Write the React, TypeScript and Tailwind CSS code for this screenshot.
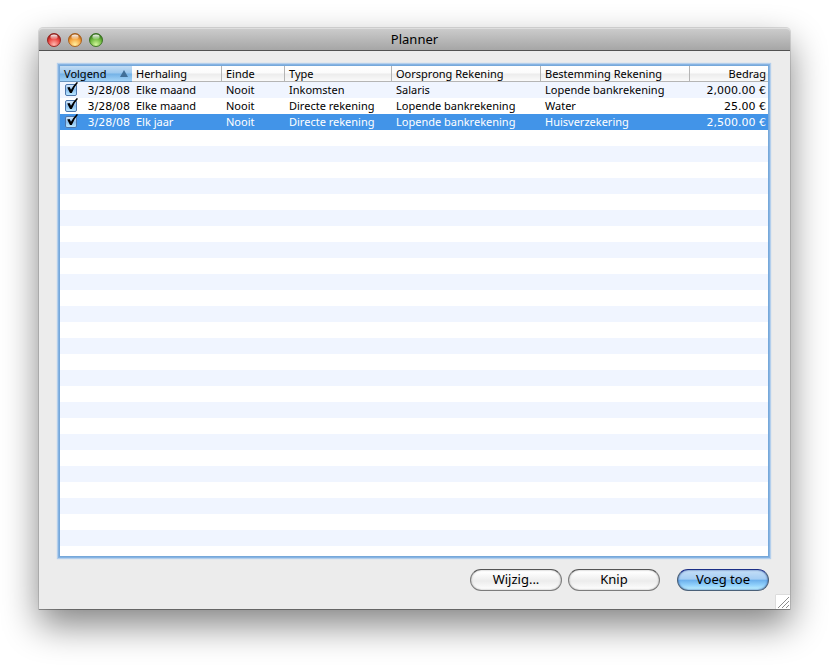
import React from "react";

type Transaction = {
  id: number;
  date: string;
  repeat: string;
  end: string;
  type: string;
  from: string;
  to: string;
  amount: string;
  selected?: boolean;
};

const transactions: Transaction[] = [
  {
    id: 1,
    date: "3/28/08",
    repeat: "Elke maand",
    end: "Nooit",
    type: "Inkomsten",
    from: "Salaris",
    to: "Lopende bankrekening",
    amount: "2,000.00 €",
  },
  {
    id: 2,
    date: "3/28/08",
    repeat: "Elke maand",
    end: "Nooit",
    type: "Directe rekening",
    from: "Lopende bankrekening",
    to: "Water",
    amount: "25.00 €",
  },
  {
    id: 3,
    date: "3/28/08",
    repeat: "Elk jaar",
    end: "Nooit",
    type: "Directe rekening",
    from: "Lopende bankrekening",
    to: "Huisverzekering",
    amount: "2,500.00 €",
    selected: true,
  },
];

const columns = [
  { title: "Herhaling", width: "w-[90px]" },
  { title: "Einde", width: "w-[63px]" },
  { title: "Type", width: "w-[107px]" },
  { title: "Oorsprong Rekening", width: "w-[149px]" },
  { title: "Bestemming Rekening", width: "w-[149px]" },
];

const lights = [
  { name: "Sluit", id: "red", dark: "#8e1713", mid: "#ea4540", light: "#ffb9b0" },
  { name: "Minimaliseer", id: "amber", dark: "#a3560f", mid: "#f5a23c", light: "#fff0a0" },
  { name: "Vergroot", id: "green", dark: "#2f6a17", mid: "#6db83e", light: "#d3f79c" },
];

const TitleBar = () => {
  return (
    <header className="relative flex h-[23px] items-center justify-center rounded-t border-t border-[#dedede] border-b border-b-[#515151] bg-linear-to-b from-[#cbcbcb] to-[#a6a6a6] pb-[2px]">
      <div className="absolute left-2 top-1 flex gap-[7px]">
        {lights.map((l) => (
          <button key={l.id} aria-label={l.name} className="size-[14px]">
            <svg viewBox="0 0 14 14" className="size-[14px]">
              <defs>
                <radialGradient id={l.id} cx="0.5" cy="0.85" r="0.8">
                  <stop offset="0" stopColor={l.light} />
                  <stop offset="0.6" stopColor={l.mid} />
                  <stop offset="1" stopColor={l.dark} />
                </radialGradient>
                <linearGradient id={l.id + "-gloss"} x1="0" y1="0" x2="0" y2="1">
                  <stop offset="0" stopColor="#fff" stopOpacity="0.95" />
                  <stop offset="1" stopColor="#fff" stopOpacity="0.15" />
                </linearGradient>
              </defs>
              <circle cx="7" cy="7" r="6.5" fill={`url(#${l.id})`} stroke={l.dark} strokeWidth="1" strokeOpacity="0.85" />
              <ellipse cx="7" cy="3.9" rx="3.6" ry="2.3" fill={`url(#${l.id}-gloss)`} />
            </svg>
          </button>
        ))}
      </div>
      <h1 className="text-[13px] leading-4">Planner</h1>
    </header>
  );
};

const CheckBox = ({ label }: { label: string }) => {
  return (
    <span className="relative block size-3">
      <input
        type="checkbox"
        defaultChecked
        aria-label={label}
        className="peer block size-3 appearance-none rounded-[2px] border border-[#4d76ab] bg-linear-to-b from-[#d3e6f9] via-[#8cc0f0] to-[#b9e6ff]"
      />
      {/* the tick sticks out of the box */}
      <svg
        viewBox="0 0 14 14"
        className="pointer-events-none invisible absolute -top-[2px] left-0 size-[14px] peer-checked:visible"
      >
        <path d="M2.2 5.6 L4.6 5 L6 7.8 Q8.6 3.2 11.8 0 L13 0.8 Q9.2 4.8 6.8 11 L5 11 Z" fill="#000" />
      </svg>
    </span>
  );
};

const PlanTable = () => {
  return (
    <div className="mr-px flex-1 bg-white bg-[repeating-linear-gradient(to_bottom,#f0f5ff_0px,#f0f5ff_16px,#fff_16px,#fff_32px)] bg-[position:0_16px] shadow-[0_0_0_1px_#76a8da,0_0_0_2px_#86b3e2,0_0_1px_3px_#b4cfec]">
      <table className="w-full table-fixed border-collapse whitespace-nowrap text-left text-[11px] leading-4">
        <thead>
          <tr className="h-4 bg-[linear-gradient(to_bottom,#fff_0px,#fbfbfb_7px,#ececec_8px,#fafafa_15px,#b5b5b5_15px,#b5b5b5_16px)]">
            <th
              aria-sort="ascending"
              className="w-[72px] bg-[linear-gradient(to_bottom,#c3dcf3_0px,#9cc8ee_7px,#74b2e6_8px,#a3d3f7_15px,#6a94bd_15px,#6a94bd_16px)] p-0 pl-1 font-normal"
            >
              <div className="flex items-center justify-between pr-1">
                Volgend
                <svg viewBox="0 0 8 7" className="mb-[2px] h-[7px] w-2">
                  <path d="M4 0 L8 7 H0 Z" fill="#416f98" />
                </svg>
              </div>
            </th>
            {columns.map((col) => (
              <th key={col.title} className={`${col.width} p-0 pl-1 font-normal shadow-[inset_-1px_0_0_#b5b5b5]`}>
                {col.title}
              </th>
            ))}
            <th className="p-0 pr-[2px] text-right font-normal">Bedrag</th>
          </tr>
        </thead>
        <tbody>
          {transactions.map((t) => (
            <tr key={t.id} className={t.selected ? "h-4 bg-[#4294e8] text-white" : "h-4"}>
              <td className="p-0">
                <div className="flex items-center justify-between pl-[5px] pr-[2px]">
                  <CheckBox label={`${t.repeat} ${t.type}`} />
                  <span className="pt-[2px] font-['DejaVu_Sans',sans-serif] leading-[14px]">{t.date}</span>
                </div>
              </td>
              <td className="p-0 pl-1">{t.repeat}</td>
              <td className="p-0 pl-1">{t.end}</td>
              <td className="p-0 pl-1">{t.type}</td>
              <td className="p-0 pl-1">{t.from}</td>
              <td className="p-0 pl-1">{t.to}</td>
              <td className="p-0 pt-[2px] pr-[2px] text-right font-['DejaVu_Sans',sans-serif] leading-[14px]">
                {t.amount}
              </td>
            </tr>
          ))}
        </tbody>
      </table>
    </div>
  );
};

const plain =
  "h-[22px] w-[92px] rounded-full border border-[#7c7c7c] border-t-[#555] bg-linear-to-b from-white from-10% via-[#ececec] via-55% to-white pb-[2px] text-[13px] leading-4 shadow-[inset_0_0_2px_#a0a0a0]";
const primary =
  "ml-[11px] h-[22px] w-[92px] rounded-full border border-[#4a6078] border-t-[#1c2f86] bg-[linear-gradient(to_bottom,#c5dff7_0%,#a5cdf3_45%,#6db1ec_52%,#90d0fb_75%,#c3f3ff_100%)] pb-[2px] text-[13px] leading-4 shadow-[inset_0_0_2px_#24489a]";

const App = () => {
  return (
    <div className="flex min-h-screen flex-col bg-white px-[39px] pt-7 pb-[61px] font-['Noto_Sans',sans-serif] text-black">
      <main className="relative flex flex-1 flex-col rounded-t bg-[#ececec] shadow-[0_0_0_1px_rgba(0,0,0,0.12),0_1px_0_0_rgba(0,0,0,0.25),0_16px_36px_rgba(0,0,0,0.49)]">
        <TitleBar />
        <div className="flex flex-1 flex-col px-[21px] pt-[15px] pb-[18px]">
          <PlanTable />
          <footer className="mt-[13px] flex justify-end gap-[6px]">
            <button className={plain}>Wijzig...</button>
            <button className={plain}>Knip</button>
            <button className={primary}>Voeg toe</button>
          </footer>
        </div>
        {/* resize corner */}
        <svg viewBox="0 0 15 15" className="absolute bottom-0 right-0 size-[15px]">
          <path d="M0 0H15V15H0Z" fill="#fff" />
          <path d="M0.5 15V0.5H15" fill="none" stroke="#dcdcdc" />
          <path d="M3 14 L14 3 M7 14 L14 7 M11 14 L14 11" stroke="#8c8c8c" strokeWidth="1" />
        </svg>
      </main>
    </div>
  );
};

export default App;
